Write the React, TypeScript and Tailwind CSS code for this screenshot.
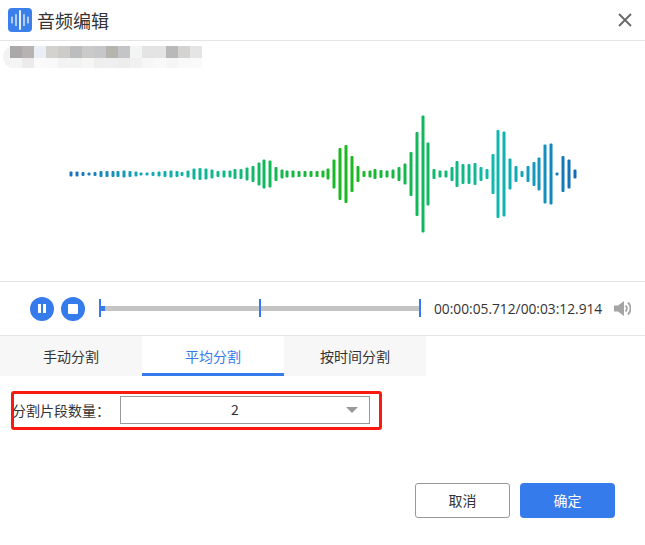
import React from 'react';

const FONT = '"Noto Sans CJK SC", "Noto Sans", sans-serif';

// [x, height] for each bar of the wave form
const BARS: [number, number][] = [
  [71, 5], [77, 5], [83, 4], [89, 3], [95, 4], [101, 6], [107, 6], [113, 6], [118, 6], [124, 7],
  [130, 6], [136, 5], [141, 3], [147, 3], [153, 4], [159, 5], [165, 6], [171, 7], [177, 6], [182, 4],
  [188, 7], [194, 11], [200, 12], [206, 11], [212, 9], [218, 6], [224, 7], [230, 7], [235, 10], [241, 10],
  [247, 13], [253, 16], [259, 23], [264, 29], [270, 27], [276, 14], [282, 9], [287, 7], [293, 7], [299, 6],
  [305, 6], [311, 6], [317, 6], [323, 7], [328, 11], [334, 29], [340, 52], [346, 58], [352, 36], [358, 16],
  [364, 6], [370, 7], [375, 10], [381, 8], [387, 7], [393, 9], [399, 14], [405, 21], [411, 44], [417, 84],
  [423, 117], [428, 63], [434, 10], [440, 7], [446, 7], [452, 14], [457, 26], [463, 20], [469, 20], [475, 22],
  [481, 14], [487, 10], [493, 40], [498, 88], [504, 85], [510, 31], [516, 16], [522, 6], [528, 16], [534, 24],
  [539, 33], [545, 59], [551, 61], [557, 3], [563, 36], [569, 29], [575, 9],
];

const MOSAIC_TOP = ['#a9a9ab', '#b8b3b0', '#e9eff4', '#d4d2cf', '#cdccca', '#bcbdbf', '#cacaca', '#c5c7c9', '#b6b4ae', '#c4c5c7', '#f3f4f4', '#e4e4e4', '#e4e4e4', '#b9b9b9', '#d4d3d1', '#e5e5e5'];
const MOSAIC_BOTTOM = ['#f4f6f5', '#eceaea', '#fafafa', '#f9f9f9', '#f3f3f3', '#f2f3f3', '#f6f6f4', '#eeeeee', '#efefef', '#ededed', '#f1f1f1', '#f7f7f7', '#f9f9f9', '#f6f6f6', '#f9f9f9', '#fafafa'];

const Waveform = () => (
  <svg width="645" height="213" viewBox="0 68 645 213" className="block">
    <defs>
      <linearGradient id="wave" gradientUnits="userSpaceOnUse" x1="70" y1="0" x2="577" y2="0">
        <stop offset="0" stopColor="#1a6fbb" />
        <stop offset="0.15" stopColor="#12a9b8" />
        <stop offset="0.3" stopColor="#10b98a" />
        <stop offset="0.42" stopColor="#14b84a" />
        <stop offset="0.55" stopColor="#1cb81c" />
        <stop offset="0.7" stopColor="#10b860" />
        <stop offset="0.84" stopColor="#10b8b0" />
        <stop offset="0.93" stopColor="#1295c0" />
        <stop offset="1" stopColor="#1268b8" />
      </linearGradient>
    </defs>
    {BARS.map(([x, h]) => (
      <rect key={x} x={x - 1.5} y={174 - h / 2} width="3" height={h} rx="1" fill="url(#wave)" />
    ))}
  </svg>
);

const Mosaic = () => (
  <div className="ml-[3px] mt-[5px] h-[22px] w-[199px] rounded-l-[11px] bg-[#f3f3f3] pl-[7px]">
    <div className="flex h-3">
      {MOSAIC_TOP.map((c, i) => (
        <div key={i} className="h-3 w-3" style={{ backgroundColor: c }} />
      ))}
    </div>
    <div className="flex h-[10px]">
      {MOSAIC_BOTTOM.map((c, i) => (
        <div key={i} className="h-[10px] w-3" style={{ backgroundColor: c }} />
      ))}
    </div>
  </div>
);

const Tab = ({ label, active }: { label: string; active?: boolean }) => (
  <div
    className={`flex h-10 w-[142px] items-center justify-center border-b-[3px] pt-[3px] text-[14px] ${
      active ? 'border-[#367bec] bg-white text-[#367bec]' : 'border-transparent bg-[#f7f7f7] text-[#333]'
    }`}
  >
    {label}
  </div>
);

export default function App() {
  return (
    <div className="h-[545px] w-[645px] overflow-hidden bg-white" style={{ fontFamily: FONT }}>
      {/* title bar */}
      <div className="flex h-[41px] items-center border-b border-[#e5e5e5] pl-2 pr-[13px]">
        <svg width="24" height="24" viewBox="0 0 24 24">
          <rect width="24" height="24" rx="4" fill="#3a7fea" />
          <path d="M4 9v6M8 6.500v11M16 6.500v11M20 9v6" stroke="#fff" strokeWidth="1.200" strokeLinecap="round" />
          <path d="M12 3v18" stroke="#fff" strokeWidth="1.800" strokeLinecap="round" />
        </svg>
        <span className="ml-[5px] text-[18px] leading-6 text-[#333]">音频编辑</span>
        <svg className="ml-auto" width="14" height="14" viewBox="0 0 14 14">
          <path d="M1 1l12 12M13 1L1 13" stroke="#666" strokeWidth="1.800" />
        </svg>
      </div>

      <Mosaic />
      <Waveform />

      {/* player */}
      <div className="flex h-[55px] items-center border-y border-[#e5e5e5] pl-[30px]">
        <div className="flex h-6 w-6 items-center justify-center gap-[2px] rounded-full bg-[#367bec]">
          <div className="h-[9px] w-[3px] bg-white" />
          <div className="h-[9px] w-[3px] bg-white" />
        </div>
        <div className="ml-[7px] flex h-6 w-6 items-center justify-center rounded-full bg-[#367bec]">
          <div className="h-[10px] w-[10px] rounded-[1px] bg-white" />
        </div>
        <div className="relative ml-[14px] h-[5px] w-[322px] bg-[#c4c4c4]">
          <div className="h-[5px] w-[6px] bg-[#367bec]" />
          <div className="absolute left-0 top-[-7px] h-[18px] w-[2px] bg-[#367bec]" />
          <div className="absolute left-[160px] top-[-7px] h-[18px] w-[2px] bg-[#367bec]" />
          <div className="absolute right-0 top-[-7px] h-[18px] w-[2px] bg-[#367bec]" />
        </div>
        <span className="ml-[13px] whitespace-nowrap text-[13.750px] leading-5 text-[#333]" style={{ fontFamily: '"Open Sans", sans-serif' }}>
          00:00:05.712/00:03:12.914
        </span>
        <svg className="ml-[12px]" width="17" height="15" viewBox="0 0 17 15">
          <path d="M0 4.500h4l6-4.500v15l-6-4.500H0z" fill="#a4a4a4" />
          <path d="M11.500 4.500a4 4 0 0 1 0 6M14 1.500a8.500 8.500 0 0 1 0 12" fill="none" stroke="#a4a4a4" strokeWidth="1.800" />
        </svg>
      </div>

      {/* tabs */}
      <div className="flex">
        <Tab label="手动分割" />
        <Tab label="平均分割" active />
        <Tab label="按时间分割" />
      </div>

      {/* segment count */}
      <div className="ml-[11px] mt-[15px] flex h-[39px] w-[371px] items-center rounded-[3px] border-[3px] border-[#fb1a10]">
        <span className="-ml-[2px] w-[108px] whitespace-nowrap text-[14px] text-[#333]">分割片段数量：</span>
        <div className="relative mb-[2px] flex h-[28px] w-[250px] items-center justify-center border border-[#999] text-[14px] text-[#333]">
          <span className="-ml-[20px]">2</span>
          <div className="absolute right-[11px] top-[10px] h-0 w-0 border-x-[6px] border-t-[6px] border-x-transparent border-t-[#999]" />
        </div>
      </div>

      {/* actions */}
      <div className="mt-[53px] flex justify-end gap-[10px] pr-[30px]">
        <button className="h-[35px] w-[95px] rounded-[3px] border border-[#999] bg-white text-[14px] text-[#333]">取消</button>
        <button className="h-[35px] w-[95px] rounded-[4px] bg-[#367bec] text-[14px] text-white">确定</button>
      </div>
    </div>
  );
}
